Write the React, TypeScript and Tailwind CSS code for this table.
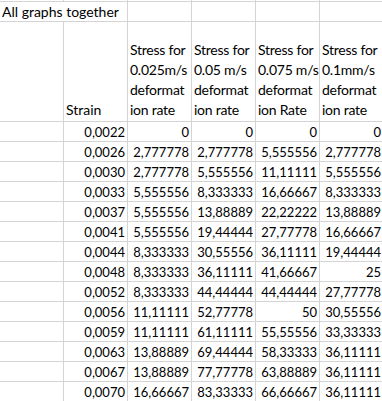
const headers = [
  ["Stress for", "0.025m/s", "deformat", "ion rate"],
  ["Stress for", "0.05 m/s", "deformat", "ion rate"],
  ["Stress for", "0.075 m/s", "deformat", "ion Rate"],
  ["Stress for", "0.1mm/s", "deformat", "ion rate"],
];

const rows = [
  ["0,0022", "0", "0", "0", "0"],
  ["0,0026", "2,777778", "2,777778", "5,555556", "2,777778"],
  ["0,0030", "2,777778", "5,555556", "11,11111", "5,555556"],
  ["0,0033", "5,555556", "8,333333", "16,66667", "8,333333"],
  ["0,0037", "5,555556", "13,88889", "22,22222", "13,88889"],
  ["0,0041", "5,555556", "19,44444", "27,77778", "16,66667"],
  ["0,0044", "8,333333", "30,55556", "36,11111", "19,44444"],
  ["0,0048", "8,333333", "36,11111", "41,66667", "25"],
  ["0,0052", "8,333333", "44,44444", "44,44444", "27,77778"],
  ["0,0056", "11,11111", "52,77778", "50", "30,55556"],
  ["0,0059", "11,11111", "61,11111", "55,55556", "33,33333"],
  ["0,0063", "13,88889", "69,44444", "58,33333", "36,11111"],
  ["0,0067", "13,88889", "77,77778", "63,88889", "36,11111"],
  ["0,0070", "16,66667", "83,33333", "66,66667", "36,11111"],
];

const cell = "border-r border-b border-[#d4d4d4] h-[20px] leading-[20px] whitespace-nowrap overflow-hidden";

export default function App() {
  return (
    <div className="w-[382px] h-[401px] overflow-hidden bg-white text-black font-['Lato',sans-serif] text-[14px]">
      <div className="grid grid-cols-[repeat(6,64px)] w-[384px]">
        {/* row above, cut off */}
        {[0, 1, 2, 3, 4, 5].map((i) => (
          <div key={i} className="h-[2px] border-r border-b border-[#d4d4d4]" />
        ))}

        {/* title row */}
        <div className="col-span-2 border-r border-b border-[#d4d4d4] h-[20px] leading-[19px] pl-[2px] whitespace-nowrap">
          All graphs together
        </div>
        {[0, 1, 2, 3].map((i) => (
          <div key={i} className={cell} />
        ))}

        {/* header row */}
        <div className="h-[100px] border-r border-b border-[#d4d4d4]" />
        <div className="h-[100px] border-r border-b border-[#d4d4d4] flex flex-col justify-end pl-[2px] pb-[1px] leading-[20px]">
          Strain
        </div>
        {headers.map((h, i) => (
          <div key={i} className="h-[100px] border-r border-b border-[#d4d4d4] flex flex-col justify-end pl-[2px] pb-[1px] leading-[20px] tracking-[-0.25px] whitespace-nowrap overflow-hidden">
            {h.map((line) => (
              <span key={line}>{line}</span>
            ))}
          </div>
        ))}

        {/* data */}
        {rows.map((r) => (
          <div key={r[0]} className="contents">
            <div className={cell} />
            {r.map((v, j) => (
              <div key={j} className={`${cell} text-right pr-[2px] text-[13px] leading-[19px]`}>
                {v}
              </div>
            ))}
          </div>
        ))}
      </div>
    </div>
  );
}
